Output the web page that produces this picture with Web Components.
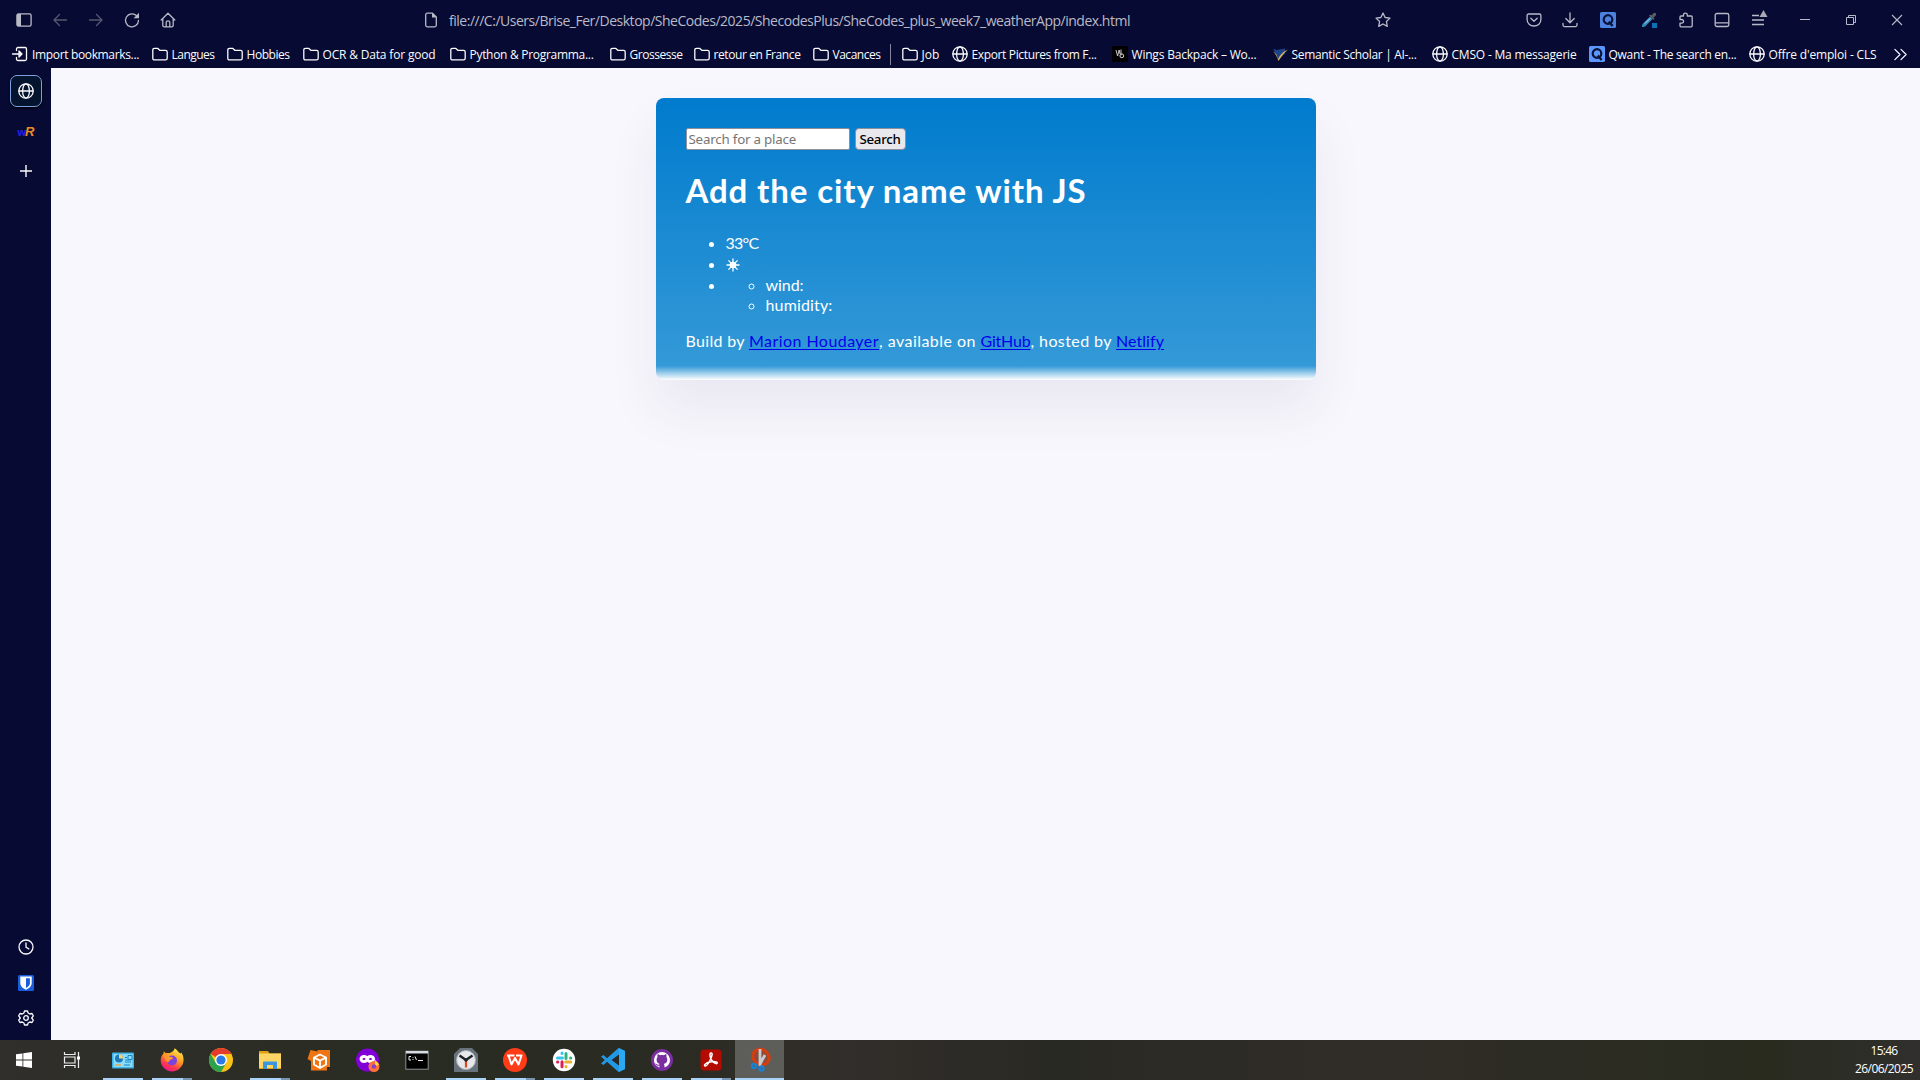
<!DOCTYPE html>
<html lang="fr"><head><meta charset="utf-8"><title>Weather App</title>
<style>html,body{margin:0;height:100%;overflow:hidden;background:#f8f7fd}</style></head><body>
<desktop-screen></desktop-screen>
<script>
const S='fill="none" stroke="currentColor" stroke-width="1.3" stroke-linecap="round" stroke-linejoin="round"';
const svg=(b,vb='0 0 16 16')=>`<svg viewBox="${vb}">${b}</svg>`;
const big=b=>svg(b,'0 0 24 24');
const ICONS={
side:svg(`<g ${S}><rect x=".9" y="1.9" width="14.2" height="12.2" rx="1.6"/></g><path d="M1 2h4v12H1z" fill="currentColor"/>`),
back:svg(`<path ${S} d="M14.5 8H2M7.5 2.5 2 8l5.500 5.500"/>`),
fwd:svg(`<path ${S} d="M1.500 8H14M8.500 2.500 14 8l-5.500 5.500"/>`),
reload:svg(`<path ${S} d="M14.500 8.500A6.500 6.500 0 1 1 12.600 3.700"/><path d="M15 .8v5.400H9.600z" fill="currentColor"/>`),
home:svg(`<path ${S} d="M1.200 8 8 1.200 14.800 8M2.800 6.800v6.400c0 1 .5 1.600 1.400 1.600h7.600c.9 0 1.400-.6 1.400-1.600V6.800M6.200 14.500v-4.200c0-1 .7-1.500 1.800-1.500s1.800.5 1.800 1.500v4.200"/>`),
file:svg(`<path ${S} d="M9.500 1.200H4.200C3.300 1.200 2.700 1.800 2.700 2.700v10.600c0 .9.600 1.500 1.500 1.500h7.600c.9 0 1.500-.6 1.500-1.500V5z"/><path d="M9 1v4.500h4.500z" fill="currentColor"/>`),
star:svg(`<path ${S} d="m8 1 2.100 4.500 4.900.600-3.600 3.400.9 4.900L8 12l-4.300 2.400.9-4.900L1 6.100l4.900-.6z"/>`),
pocket:svg(`<path ${S} d="M2.500 2h11c.8 0 1.400.6 1.400 1.400v4C14.900 11.500 11.800 14 8 14S1.100 11.500 1.100 7.400v-4C1.100 2.600 1.700 2 2.500 2zM4.800 6.200 8 9.200l3.200-3"/>`),
down:svg(`<path ${S} d="M8 .8v9.700M3.800 6.500 8 10.700l4.200-4.200M1 11.500v1.600c0 .9.500 1.500 1.500 1.500h11c1 0 1.500-.6 1.500-1.500v-1.600"/>`),
qwant:svg(`<rect width="16" height="16" rx="1.500" fill="var(--q,#4e82e0)"/><circle cx="8" cy="7.500" r="4.300" fill="none" stroke="#0a1238" stroke-width="2.200"/><path d="m8.800 9.500 3.800 4.500" stroke="#0a1238" stroke-width="2.200"/>`),
pick:svg(`<path d="M1 15c0-2 .5-3 1.700-4.200L9 4.500l2.500 2.500-6.400 6.400C4 14.500 3 15 1 15z" fill="#3689bd"/><path d="m4 11.500 5-5" stroke="#a8ddec"/><path d="M8 3.500 12.500 8l1-1.300-1-1L15 3.200C16 2 14 0 12.800 1l-2.500 2.500-1-1z" fill="#5c5e66"/><path d="M11 11h5v5h-5z" fill="#0a72b5"/>`),
puzzle:svg(`<path ${S} d="M5.500 4V2.700C5.500.500 9.300.5 9.300 2.700V4h3.900c.6 0 1 .4 1 1v8.800c0 .6-.4 1-1 1H3c-.6 0-1-.4-1-1v-2.600h1.700c2.500 0 2.500-3.700 0-3.700H2V5c0-.6.4-1 1-1z"/>`),
lap:svg(`<g ${S}><rect x="1.200" y="1.500" width="13.600" height="13" rx="1.800"/><path d="M1.500 10.800h13"/></g>`),
menu:svg(`<path fill="none" stroke="currentColor" stroke-width="1.300" d="M2 3.500h7M2 8h12M2 12.500h12"/><path d="M9.500 5 13.500-2 17.500 5z" fill="#a9a9b2"/>`),
min:svg(`<path d="M3 7.500h10" stroke="currentColor" stroke-width="1"/>`),
max:svg(`<g fill="none" stroke="currentColor" stroke-width="1"><path d="M3.500 5.500h7v7h-7z"/><path d="M5.500 5.500v-2h7v7h-2"/></g>`),
close:svg(`<path d="m3 3 10 10M13 3 3 13" stroke="currentColor" stroke-width="1.100"/>`),
imp:svg(`<path ${S} stroke-width="1.500" d="M4.500 4.500V3c0-.9.600-1.500 1.500-1.500h7c.9 0 1.500.6 1.500 1.500v10c0 .9-.6 1.500-1.500 1.500H6c-.9 0-1.500-.6-1.500-1.500v-1.500M.5 8h9.300M7 5l3 3-3 3z"/>`),
folder:svg(`<path ${S} d="M.8 4c0-1 .6-1.700 1.600-1.700h3.200L7.800 4.300h5.800c1 0 1.600.6 1.600 1.600v6.400c0 1-.6 1.600-1.600 1.600H2.400c-1 0-1.600-.6-1.600-1.600z"/>`),
globe:svg(`<g ${S}><circle cx="8" cy="8" r="7.200"/><ellipse cx="8" cy="8" rx="3.400" ry="7.200"/><path d="M1 8h14"/></g>`),
wb:svg(`<path d="M0 0h16v16H0z" fill="#000"/><path d="m4 4 1.600 6 1.500-6 1 4M9 3.500v6" stroke="#ddd" fill="none" stroke-width=".9"/><circle cx="9.800" cy="9.800" r="1.900" fill="none" stroke="#ddd"/>`),
sem:svg(`<path d="m1 3 4 1 8-1.500v5L7 13.500z" fill="#1d448a"/><path d="M1 5.500c3 1.500 4 3.500 5 7.500C8 9 11 5.500 16 3.500 12 7 9 11 6.500 15 5 11 4 8 1 5.500z" fill="#d9b25c"/>`),
more:svg(`<path ${S} d="m2 2.500 5.500 5.500L2 13.500M8.500 2.500 14 8l-5.500 5.500"/>`),
plus:svg(`<path d="M8 2v12M2 8h12" stroke="currentColor" stroke-width="1.400"/>`),
clock:svg(`<path ${S} d="M15 8A7 7 0 1 1 1 8a7 7 0 1 1 14 0M8 4v4.300l2.800 1.600"/>`),
bit:svg(`<rect width="16" height="16" rx="1.500" fill="#175ddc"/><path d="M2.300 1.500h11.400v6.700c0 3-2.800 5.200-5.700 6.500-2.900-1.300-5.700-3.500-5.700-6.500z" fill="#fff"/><path d="M8 3.200h3.900v5c0 2-1.900 3.600-3.900 4.700z" fill="#175ddc"/>`),
gear:svg(`<path ${S} d="M6.500 1h3l.6 2 1.700 1 2.200-.5 1.300 2.300L13.700 8l1.600 2.200-1.300 2.300-2.200-.5-1.700 1-.6 2h-3l-.6-2-1.700-1-2.200.5L.7 10.200 2.300 8 .7 5.800 2 3.500l2.200.5 1.700-1z"/><circle cx="8" cy="8" r="2.300" ${S}/>`),
win:svg(`<path fill="#fff" d="M0 2.300 6.500 1.400v6.200H0zM7.300 1.300 16 0v7.600H7.300zM0 8.400h6.500v6.200L0 13.700zM7.300 8.400H16V16l-8.700-1.300z"/>`),
task:big(`<g fill="none" stroke="#eee" stroke-width="1.200"><path d="M4.500 4v2.500h10.500V4M4.500 20v-2.500h10.500V20M4.500 9h10.500v6H4.500zM18.500 4v16"/></g><path d="M17 8.500h3v3h-3z" fill="#fff"/>`),
cp:big(`<rect x="1" y="4.500" width="22" height="16" rx="1" fill="#3fb3e8"/><rect x="2.500" y="6" width="19" height="13" fill="#8adcfb"/><circle cx="8" cy="10.500" r="4" fill="#1b78bd"/><path d="M8 10.500V6.300a4 4 0 0 1 4 4.200z" fill="#ffd26d"/><path d="M14 12h6M14 9.500h2M17 7.500h4v4h-4zM14 14h6" stroke="#1686c4" stroke-width="1" fill="none"/><path d="M4 17h6" stroke="#f6992b" stroke-width="1.200"/><path d="M13 17h6" stroke="#1686c4"/>`),
ff:big(`<defs><linearGradient id="f" x1=".8" y1="0" x2=".3" y2="1"><stop stop-color="#fff34a"/><stop offset=".45" stop-color="#ff9a22"/><stop offset=".75" stop-color="#ff3b4c"/><stop offset="1" stop-color="#e3178f"/></linearGradient></defs><path fill="url(#f)" d="M14.500.3c3.500 2 3.600 4 5.500 5 .8.500 1.500-.5 1.200-1 2 3 2.500 5.500 2.300 8.500-.5 6-5.500 10.700-11.500 10.700S.7 18.500.7 12.500C.7 9 2 7 3.500 5.500l.3-2.300 2 2C7.500 4.700 9 5 9.500 5.200 11.300 4.500 14.500 3 14.500.3z"/><circle cx="12" cy="12.500" r="5" fill="#7c42db"/><path d="M3.500 7c3-1 5 0 6.500 2 2 0 3 .5 3 1.300 0 1.200-3.700 1.200-3.700 3 0 1.200-3 1-3.700-1z" fill="#ff9830"/>`),
chrome:big(`<circle cx="12" cy="12" r="12" fill="#fbc116"/><path d="M12 12 1.600 6A12 12 0 0 1 22.400 6H12z" fill="#e33b2e"/><path d="M1.600 6A12 12 0 0 0 12 24l5.200-9-10.400 0z" fill="#2ba24c"/><circle cx="12" cy="12" r="6" fill="#fff"/><circle cx="12" cy="12" r="4.600" fill="#2979e8"/>`),
exp:big(`<path d="M1 3h9l1.500 2.500H23V21H1z" fill="#e0a210"/><path d="M1 5.500h22V20H1z" fill="#ffd666"/><path d="M5 21v-6.500c0-.6.500-1 1-1h12c.6 0 1 .4 1 1V21h-4v-4H9v4z" fill="#3a97dc"/>`),
box:big(`<path d="m3.500 2 7 1.500V2H23v17h-3v3.500H4V13L.5 11z" fill="#ef7412"/><g fill="#ef7412" stroke="#fff" stroke-width="1.900" stroke-linejoin="round"><path d="m13 6.500 6 3v7l-6 3.500-6-3.500v-7zM7 9.500l6 3.200 6-3.200M13 12.700V20"/></g>`),
mask:big(`<circle cx="11.500" cy="12" r="11.500" fill="#8000d7"/><g fill="none" stroke="#fff" stroke-width="3"><ellipse cx="8" cy="11" rx="3" ry="2.600"/><ellipse cx="14.500" cy="11" rx="3" ry="2.600"/></g><circle cx="18" cy="18.500" r="5.500" fill="#ff7139"/><path d="m19 11.500 4 5-4 2z" fill="#ffd43b"/><circle cx="18" cy="18.500" r="2.300" fill="#8a3fd1"/>`),
cmd:big(`<rect x=".8" y="3.200" width="22.400" height="18" fill="#000" stroke="#8d9094"/><path d="M1 3h22v2.500H1z" fill="#d5dae0"/><path d="M6 8.500H4v3.500h2M8 9v.8M8 11v1M10 8.500l1.500 3.500M13 12.500h5" stroke="#eee" stroke-width="1" fill="none"/>`),
clk:big(`<path d="M0 6 6 0h12l6 6v18H0z" fill="#68727d"/><circle cx="12" cy="12" r="9.500" fill="#e6e8ea" stroke="#aab0b6"/><path d="M5.500 7.500 12 12l6.500-4.500" fill="none" stroke="#1d2228" stroke-width="2.500"/><path d="M12 12v7.500" stroke="#d84a1b" stroke-width="2.200"/><circle cx="12" cy="12" r="1.700" fill="#1d2228"/>`),
wps:big(`<circle cx="12" cy="12" r="12" fill="#ff3c17"/><path d="M4 7.500h7.500M5.500 7.500l3 9L12 10l3.500 6.500 3-9H13" fill="none" stroke="#fff" stroke-width="2" stroke-linejoin="round"/>`),
slack:big(`<circle cx="12" cy="12" r="11.200" fill="#fff"/><g stroke-width="3" stroke-linecap="round"><path d="M5.500 10h5M10 5v.5" stroke="#36c5f0"/><path d="M14 5.500v5M18.500 10h.3" stroke="#2eb67d"/><path d="M13.800 14h5M14 18.500v.3" stroke="#ecb22e"/><path d="M10 13.800v5M5.500 14h.3" stroke="#e01e5a"/></g>`),
code:big(`<path d="M17.500 0 24 3v18l-6.500 3L6 13.800 2.500 17 0 15.500 3.800 12 0 8.500 2.500 7 6 10.200z" fill="#2299e5"/><path d="M18 6.500v11L10.500 12z" fill="#292923"/><path d="M18 0 24 3v18l-6 3z" fill="#2ba9f2"/>`),
gh:big(`<circle cx="12" cy="12" r="11" fill="#7a2e9f"/><path fill="#fff" fill-rule="evenodd" d="M12 4a8 8 0 0 0-2.500 15.600v-1.900c-3 .6-3.400-1.300-4.300-2.200 1.300-.3 1.800 1.200 2.900 1.300.6 0 1.300-.2 1.500-.8C7.700 15.500 6.600 14 6.600 11.600c0-1.200.3-2 .9-2.700-.3-1 0-2.100.3-2.600 1.100 0 2 .7 2.500 1 1.200-.3 2.300-.3 3.500 0 .4-.3 1.300-1 2.400-1 .3.500.5 1.600.2 2.600.6.700.9 1.500.9 2.700 0 2.400-1.100 3.900-3.500 4.400.5.500.7 1.200.7 2v1.600A8 8 0 0 0 12 4z"/><path fill="#fff" d="M9.500 19.600v-3.600C7.700 15.500 6.600 14 6.600 11.600c0-1.200.3-2 .9-2.700z" fill-opacity="0"/>`),
pdf:big(`<rect x="1.500" y="1.500" width="21" height="21" rx="3.500" fill="#b30b00"/><path d="M12 5c2 0 1 3-.5 6.300C9.800 15 7.500 18.500 6 18c-1.700-.7 1-3.200 5-4 4-.9 7.500-.3 7.300 1-.2 1.500-3.300.3-5.300-2.200C11 10 10.200 5 12 5z" fill="none" stroke="#fff" stroke-width="1.500"/>`),
snip:big(`<ellipse cx="13" cy="9" rx="8.500" ry="7.500" transform="rotate(35 13 9)" fill="#8e4a36" stroke="#d63d0d" stroke-width="3"/><path d="M12 1v17M17 7l-5 9" stroke="#c7cbd0" stroke-width="2.800"/><circle cx="6" cy="18" r="2.100" fill="none" stroke="#1683d8" stroke-width="2.200"/><circle cx="13.500" cy="20.500" r="2.100" fill="none" stroke="#1683d8" stroke-width="2.200"/>`)
};
const define=(n,css,html,after)=>customElements.define(n,class extends HTMLElement{
 connectedCallback(){ if(this.shadowRoot)return; const r=this.attachShadow({mode:'open'});
 r.innerHTML=`<style>*{box-sizing:border-box}${css}</style>${typeof html==='function'?html(this):html}`; if(after)after(this,r);}});

/* inline text whose tracking is tuned to fill the width given in "w" */
define('fit-text',':host{display:inline-block;white-space:pre;text-decoration:inherit}span{display:inline-block;text-decoration:inherit}','<span><slot></slot></span>',(h,r)=>{
 const s=r.querySelector('span'),w=+h.getAttribute('w'),n=[...h.textContent].length;
 h.style.width=w+'px'; s.style.letterSpacing=((w-s.getBoundingClientRect().width)/n)+'px';});
define('ui-icon',':host{display:block;flex:none}svg{display:block;width:100%;height:100%;overflow:visible}',h=>{
 const s=h.getAttribute('size')||16; h.style.width=h.style.height=s+'px'; return ICONS[h.getAttribute('name')];});
define('tool-slot',':host{display:flex;justify-content:center;align-items:center;height:40px;flex:none}',h=>{
 h.style.width=h.getAttribute('w')+'px'; return `<ui-icon name="${h.getAttribute('icon')}" size="${h.getAttribute('size')||16}"></ui-icon>`;});
define('browser-toolbar',`:host{display:flex;height:40px;color:#b9bac8;font:14px "Open Sans",sans-serif}.dim{color:#55586f}.url{display:flex;width:1225px;align-items:center;gap:10px;padding-left:238px}.url fit-text{padding-top:1px}.star{margin-left:235px}`,
`<tool-slot w="36" icon="side" style="margin-left:6px"></tool-slot><tool-slot class="dim" w="36" icon="back"></tool-slot><tool-slot class="dim" w="36" icon="fwd"></tool-slot><tool-slot w="36" icon="reload"></tool-slot><tool-slot w="35" icon="home"></tool-slot>
<div class="url"><ui-icon name="file"></ui-icon><fit-text w="681">file:///C:/Users/Brise_Fer/Desktop/SheCodes/2025/ShecodesPlus/SheCodes_plus_week7_weatherApp/index.html</fit-text><ui-icon class="star" name="star"></ui-icon></div>
<div style="flex:1"></div>
<tool-slot w="36" icon="pocket"></tool-slot><tool-slot w="35" icon="down"></tool-slot><tool-slot w="41" icon="qwant"></tool-slot><tool-slot w="41" icon="pick"></tool-slot><tool-slot w="34" icon="puzzle"></tool-slot><tool-slot w="38" icon="lap"></tool-slot><tool-slot w="34" icon="menu"></tool-slot><tool-slot w="60" icon="min"></tool-slot><tool-slot w="32" icon="max"></tool-slot><tool-slot w="60" icon="close" style="margin-right:-7px"></tool-slot>`);
define('bookmark-item',':host{display:flex;gap:4px;align-items:center;flex:none;height:28px;--q:#5b97ff}',h=>{
 h.style.width=h.getAttribute('w')+'px'; return `<ui-icon name="${h.getAttribute('icon')}"></ui-icon><fit-text w="${h.getAttribute('t')}">${h.textContent}</fit-text>`;});
const BM=[['imp','Import bookmarks...',139.5,107],['folder','Langues',75,43],['folder','Hobbies',76,43],['folder','OCR &amp; Data for good',147,113],['folder','Python &amp; Programma...',160,124],['folder','Grossesse',84,53],['folder','retour en France',119,87],['folder','Vacances',77.5,48],'|',['folder','Job',50,18],['globe','Export Pictures from F...',160,125],['wb','Wings Backpack – Wo...',160,125],['sem','Semantic Scholar | AI-...',160,125],['globe','CMSO - Ma messagerie',157,125],['qwant','Qwant - The search en...',160,128],['globe',"Offre d'emploi - CLS",144,108]];
define('bookmark-bar',':host{display:flex;height:28px;padding-left:12px;align-items:center;color:#fbfbfe;font:12px "Open Sans",sans-serif}i{width:1px;height:21px;background:#8587a0;margin-right:10.500px}',
 BM.map(b=>b==='|'?'<i></i>':`<bookmark-item icon="${b[0]}" w="${b[2]}" t="${b[3]}">${b[1]}</bookmark-item>`).join('')+'<ui-icon name="more" size="15"></ui-icon>');
define('side-rail',`:host{display:flex;flex-direction:column;align-items:center;width:51px;flex:none;background:#070b33;color:#fbfbfe;padding-top:7px}
.tab{width:32px;height:32px;border:1px solid #7ea0e0;border-radius:7px;background:#04132e;display:grid;place-items:center;box-shadow:0 1px 3px #000}
.wr{height:16px;margin-top:17px;font:bold 11px/17px "Liberation Sans";color:#2a20e8;letter-spacing:-1px}.wr b{color:#ee8a25;font:italic bold 13px/16px "Liberation Sans"}
.plus{margin-top:23px}.sp{flex:1}.low{display:flex;flex-direction:column;gap:19.500px;padding-bottom:14px}`,
`<div class="tab"><ui-icon name="globe"></ui-icon></div><div class="wr">w<b>R</b></div><ui-icon class="plus" name="plus"></ui-icon><div class="sp"></div><div class="low"><ui-icon name="clock"></ui-icon><ui-icon name="bit"></ui-icon><ui-icon name="gear"></ui-icon></div>`);
define('search-form',`:host{display:flex;gap:5px;height:22px;font:13.333px "Noto Sans",sans-serif}input,button{font:inherit;height:22px;margin:0;padding:0 2px;border:1px solid #8f8f9d}
input{width:164px;border-radius:2px;letter-spacing:-.2px}input::placeholder{color:#757575}button{width:51px;border-radius:4px;background:#e9e9ed;color:#000;font-weight:500;padding:0;letter-spacing:-.3px}`,
`<input placeholder="Search for a place"><button>Search</button>`);
define('weather-card',`:host{display:block;width:660px;height:282px;padding:30px;border-radius:8px;color:#fff;font:16px/20px Lato,sans-serif;background:linear-gradient(#007bcd,#3499d7 95%,#fff);box-shadow:0 30px 50px rgba(65,50,100,.08)}
h1{font-size:33px;line-height:40px;height:40px;margin:20px 0 23px}ul{margin:0;padding-left:40px}p{margin:16px 0 0;white-space:nowrap;display:flex}a{color:#00e;text-decoration:underline;text-underline-offset:2px}.sun{height:21px;line-height:22px}.sun svg{display:block;position:relative;top:5px}`,
`<search-form></search-form><h1><fit-text w="401">Add the city name with JS</fit-text></h1>
<ul><li><fit-text w="33">33°C</fit-text></li><li class="sun"><svg width="14" height="14" viewBox="-7 -7 14 14"><circle r="3.300" fill="#fff"/><path d="M0-6.500V6.500M-6.500 0H6.500M-4.600-4.600 4.600 4.600M4.600-4.600-4.600 4.600" stroke="#fff" stroke-width="1.300"/></svg></li><li><ul><li><fit-text w="38">wind:</fit-text></li><li><fit-text w="67">humidity:</fit-text></li></ul></li></ul>
<p><fit-text w="63.500">Build by </fit-text><a href="#"><fit-text w="130">Marion Houdayer</fit-text></a><fit-text w="101.500">, available on </fit-text><a href="#"><fit-text w="50">GitHub</fit-text></a><fit-text w="85.500">, hosted by </fit-text><a href="#"><fit-text w="48">Netlify</fit-text></a></p>`);
define('task-button',`:host{display:flex;flex-direction:column;width:49px;height:40px;align-items:center;padding-top:8px;flex:none;justify-content:space-between}
:host([active]){background:#5d5d59}.u{display:flex;width:40px;height:2px;background:var(--u,transparent)}.u i{margin-left:auto;width:9px;height:2px;background:var(--d,transparent)}
:host([open]){--u:#a9d3f8}:host([multi]){--u:#a9d3f8;--d:#7795b0}:host([active]) .u{width:49px}`,
h=>`<ui-icon name="${h.getAttribute('icon')}" size="24"></ui-icon><div class="u"><i></i></div>`);
define('task-bar',`:host{display:flex;height:40px;background:linear-gradient(90deg,#302f2b,#292c22 22%,#2a2b23 35%,#322e2b 44%,#292923 55%,#302d28 70%,#292b1f 92%,#302f2d);color:#fff;font:12px/18px "Open Sans",sans-serif}
.st{width:48px;height:40px;display:grid;place-items:center}.st+.st{width:50px;padding-right:2px}.clock{margin-left:auto;width:66px;padding-right:6px;display:flex;flex-direction:column;align-items:center;padding-top:2px}`,
`<div class="st"><ui-icon name="win"></ui-icon></div><div class="st"><ui-icon name="task" size="24"></ui-icon></div>`+
[['cp','open'],['ff','multi'],['chrome',''],['exp','multi'],['box',''],['mask',''],['cmd',''],['clk','open'],['wps','multi'],['slack','open'],['code','open'],['gh','open'],['pdf','multi'],['snip','open active']].map(a=>`<task-button icon="${a[0]}" ${a[1]}></task-button>`).join('')+
`<div class="clock"><fit-text w="27">15:46</fit-text><fit-text w="58">26/06/2025</fit-text></div>`);
define('desktop-screen',`:host{display:flex;flex-direction:column;width:1920px;height:1080px;overflow:hidden}header{background:#070b33;height:68px}.mid{display:flex;flex:1;min-height:0}main{flex:1;background:#f8f7fd;padding-top:30px;display:flex;justify-content:center;align-items:flex-start}`,
`<header><browser-toolbar></browser-toolbar><bookmark-bar></bookmark-bar></header><div class="mid"><side-rail></side-rail><main><weather-card></weather-card></main></div><task-bar></task-bar>`);
</script></body></html>
